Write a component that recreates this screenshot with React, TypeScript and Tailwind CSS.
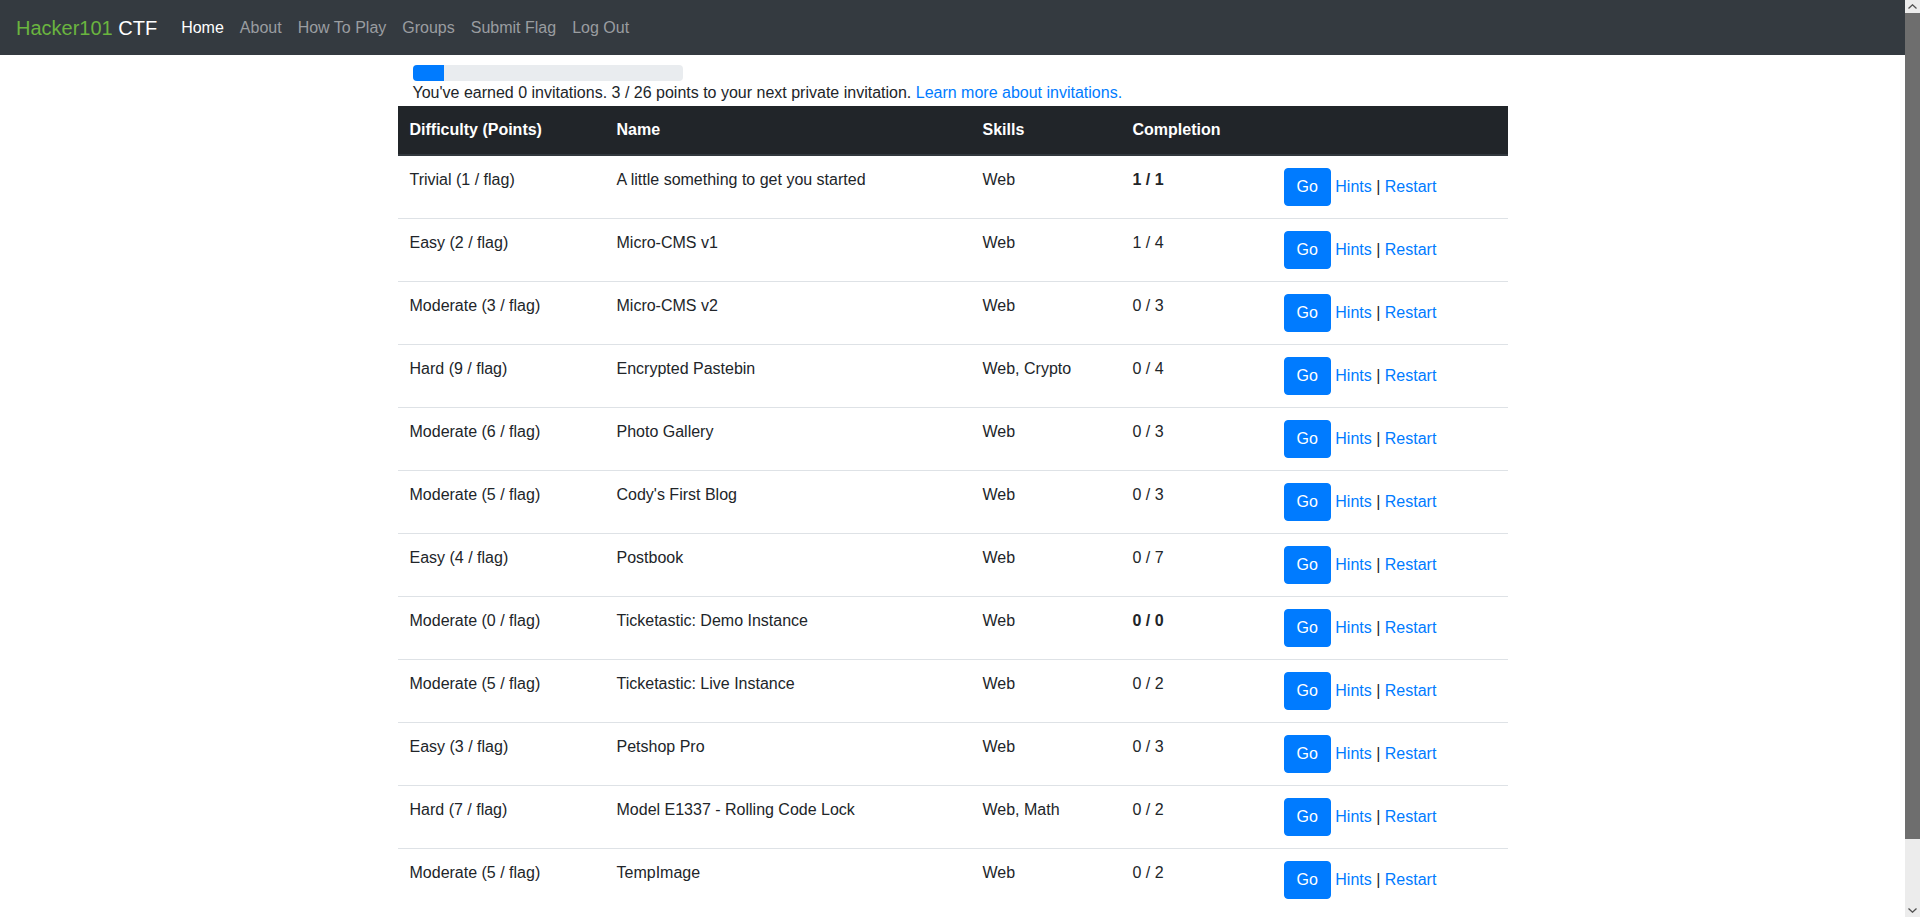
import React from "react";

type Row = {
  diff: string;
  name: string;
  skills: string;
  done: string;
  bold?: boolean;
};

const rows: Row[] = [
  { diff: "Trivial (1 / flag)", name: "A little something to get you started", skills: "Web", done: "1 / 1", bold: true },
  { diff: "Easy (2 / flag)", name: "Micro-CMS v1", skills: "Web", done: "1 / 4" },
  { diff: "Moderate (3 / flag)", name: "Micro-CMS v2", skills: "Web", done: "0 / 3" },
  { diff: "Hard (9 / flag)", name: "Encrypted Pastebin", skills: "Web, Crypto", done: "0 / 4" },
  { diff: "Moderate (6 / flag)", name: "Photo Gallery", skills: "Web", done: "0 / 3" },
  { diff: "Moderate (5 / flag)", name: "Cody's First Blog", skills: "Web", done: "0 / 3" },
  { diff: "Easy (4 / flag)", name: "Postbook", skills: "Web", done: "0 / 7" },
  { diff: "Moderate (0 / flag)", name: "Ticketastic: Demo Instance", skills: "Web", done: "0 / 0", bold: true },
  { diff: "Moderate (5 / flag)", name: "Ticketastic: Live Instance", skills: "Web", done: "0 / 2" },
  { diff: "Easy (3 / flag)", name: "Petshop Pro", skills: "Web", done: "0 / 3" },
  { diff: "Hard (7 / flag)", name: "Model E1337 - Rolling Code Lock", skills: "Web, Math", done: "0 / 2" },
  { diff: "Moderate (5 / flag)", name: "TempImage", skills: "Web", done: "0 / 2" },
];

const navItems = ["Home", "About", "How To Play", "Groups", "Submit Flag", "Log Out"];

function Scrollbar() {
  return (
    <div className="w-[15px] h-full bg-[#ececec] flex flex-col shrink-0">
      <div className="h-[13px] flex items-center justify-center">
        <svg width="9" height="5" viewBox="0 0 9 5">
          <path d="M0.5 4.5 L4.5 0.8 L8.5 4.5" fill="none" stroke="#505050" strokeWidth="1.3" />
        </svg>
      </div>
      <div className="h-[826px] bg-[#6e6e6e]" />
      <div className="flex-1" />
      <div className="h-[13px] flex items-center justify-center">
        <svg width="9" height="5" viewBox="0 0 9 5">
          <path d="M0.5 0.5 L4.5 4.2 L8.5 0.5" fill="none" stroke="#505050" strokeWidth="1.3" />
        </svg>
      </div>
    </div>
  );
}

export default function App() {
  const pct = (3 / 26) * 100;
  return (
    <div className="h-screen flex overflow-hidden bg-white text-[#212529] text-base leading-6 font-['Liberation_Sans',Arial,sans-serif]">
      <div className="flex-1 min-w-0 overflow-hidden">
        <nav className="h-[55px] bg-[#343a40] flex items-center px-4">
          <a className="text-[20px] leading-[30px] mr-4 whitespace-nowrap">
            <span className="text-[#6ab43f]">Hacker101</span>
            <span className="text-white"> CTF</span>
          </a>
          <ul className="flex items-center">
            {navItems.map((n, i) => (
              <li key={n}>
                <a
                  className={
                    "block px-2 py-2 leading-6 " +
                    (i === 0 ? "text-white" : "text-[#9a9da0]")
                  }
                >
                  {n}
                </a>
              </li>
            ))}
          </ul>
        </nav>

        <div className="w-[1110px] mx-auto pb-4">
          <div className="px-[15px] pt-[10px] pb-px">
            <div className="w-[270px] h-4 rounded bg-[#e9ecef] overflow-hidden flex">
              <div className="h-full bg-[#007bff]" style={{ width: `${pct}%` }} />
            </div>
            <p className="leading-6">
              You've earned 0 invitations. 3 / 26 points to your next private invitation.{" "}
              <a className="text-[#007bff]">Learn more about invitations.</a>
            </p>
          </div>

          <table className="w-full table-fixed border-collapse">
            <thead>
              <tr className="bg-[#212529] text-white">
                <th className="w-[207px] p-3 text-left font-bold align-bottom border-b-2 border-[#32383e]">Difficulty (Points)</th>
                <th className="w-[366px] p-3 text-left font-bold align-bottom border-b-2 border-[#32383e]">Name</th>
                <th className="w-[150px] p-3 text-left font-bold align-bottom border-b-2 border-[#32383e]">Skills</th>
                <th className="w-[151px] p-3 text-left font-bold align-bottom border-b-2 border-[#32383e]">Completion</th>
                <th className="w-[236px] p-3 text-left font-bold align-bottom border-b-2 border-[#32383e]"></th>
              </tr>
            </thead>
            <tbody>
              {rows.map((r, i) => (
                <tr key={i} className="border-t border-[#dee2e6]">
                  <td className="p-3 align-top">{r.diff}</td>
                  <td className="p-3 align-top">{r.name}</td>
                  <td className="p-3 align-top">{r.skills}</td>
                  <td className={"p-3 align-top " + (r.bold ? "font-bold" : "")}>{r.done}</td>
                  <td className="p-3 align-top whitespace-nowrap">
                    <a className="inline-block px-3 py-1.5 leading-6 rounded border border-[#007bff] bg-[#007bff] text-white">Go</a>{" "}
                    <a className="text-[#007bff]">Hints</a> | <a className="text-[#007bff]">Restart</a>
                  </td>
                </tr>
              ))}
            </tbody>
          </table>
        </div>
      </div>
      <Scrollbar />
    </div>
  );
}
